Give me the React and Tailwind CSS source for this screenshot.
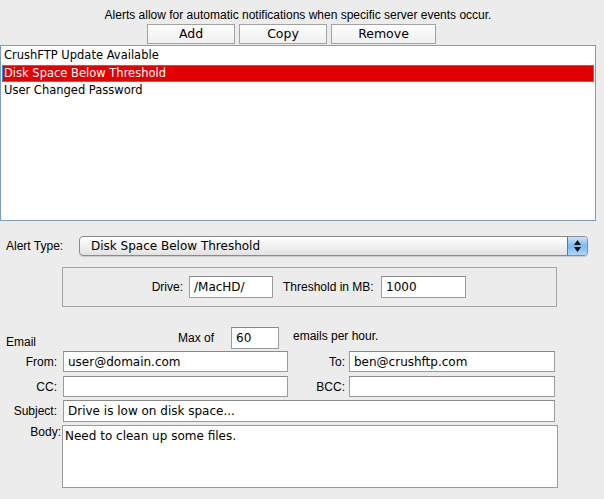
import React from "react";

const lbl = "font-['Liberation_Sans',Arial,sans-serif] text-[12px] text-black leading-[14px]";
const fld = "font-['DejaVu_Sans',sans-serif] text-[12px] text-black bg-white border border-[#9b9b9b] border-t-[#8a8a8a] px-[4px] flex items-center leading-none";

function Field({ className = "", children }) {
  return <div className={`${fld} ${className}`}>{children}</div>;
}

export default function App() {
  return (
    <div className="w-[604px] h-[499px] bg-[#ececec] overflow-hidden">
      <div className="w-[596px]">
        <div className={`${lbl} text-center pt-[8px] h-[24px]`}>
          Alerts allow for automatic notifications when specific server events occur.
        </div>
        <div className="flex h-[20px] pl-[147px] gap-[4px]">
          {[
            ["Add", "w-[88px]"],
            ["Copy", "w-[88px]"],
            ["Remove", "w-[105px]"],
          ].map(([t, w]) => (
            <div
              key={t}
              className={`${w} h-[20px] border border-[#a2a2a2] bg-gradient-to-b from-[#fdfdfd] to-[#f0f0f0] flex items-center justify-center font-['DejaVu_Sans',sans-serif] text-[12.5px] text-black`}
            >
              {t}
            </div>
          ))}
        </div>
        <div className="mt-px h-[176px] border border-[#7d9dc2] bg-white px-px pt-[1px] font-['DejaVu_Sans',sans-serif] text-[11.5px] text-black">
          <div className="h-[18px] flex items-center pl-[2px]">CrushFTP Update Available</div>
          <div className="h-[17px] flex items-center pl-[1px] bg-[#e30000] border border-[#1b8fe0] text-white">
            Disk Space Below Threshold
          </div>
          <div className="h-[17px] flex items-center pl-[2px]">User Changed Password</div>
        </div>
      </div>

      <div className="flex items-center mt-[15px] h-[20px]">
        <div className={`${lbl} w-[79px] pl-[6px]`}>Alert Type:</div>
        <div className="w-[509px] h-[20px] rounded-[4px] border border-[#8b8b8b] bg-gradient-to-b from-[#ffffff] via-[#f1f1f1] to-[#e2e2e2] flex items-center shadow-[0_1px_1px_rgba(0,0,0,0.15)] overflow-hidden">
          <div className="flex-1 pl-[11px] font-['DejaVu_Sans',sans-serif] text-[12px] text-black">
            Disk Space Below Threshold
          </div>
          <div className="w-[20px] h-full border-l border-[#5077b0] bg-gradient-to-b from-[#c8e3fb] via-[#7cbaf0] to-[#a9d6fb] flex flex-col items-center justify-center gap-[2px]">
            <svg width="7" height="5" viewBox="0 0 7 5"><path d="M3.5 0L7 5H0z" fill="#111" /></svg>
            <svg width="7" height="5" viewBox="0 0 7 5"><path d="M0 0h7L3.5 5z" fill="#111" /></svg>
          </div>
        </div>
      </div>

      <div className="ml-[62px] mt-[11px] w-[495px] h-[40px] border border-[#a4a4a4] flex items-center">
        <div className={`${lbl} w-[126px] text-right pr-[6px]`}>Drive:</div>
        <Field className="w-[84px] h-[22px]">/MacHD/</Field>
        <div className={`${lbl} ml-[10px] w-[98px]`}>Threshold in MB:</div>
        <Field className="w-[85px] h-[22px]">1000</Field>
      </div>

      <div className="flex items-start mt-[20px] h-[22px]">
        <div className={`${lbl} pl-[6px] w-[178px] mt-[8px]`}>Email</div>
        <div className={`${lbl} w-[53px] mt-[4px]`}>Max of</div>
        <Field className="w-[48px] h-[22px]">60</Field>
        <div className={`${lbl} ml-[14px] mt-[2px]`}>emails per hour.</div>
      </div>

      <div className="flex items-center mt-[2px] h-[21px]">
        <div className={`${lbl} w-[60px] text-right pr-[3px]`}>From:</div>
        <Field className="w-[225px] h-[21px] ml-[3px]">user@domain.com</Field>
        <div className={`${lbl} w-[61px] text-right pr-[4px]`}>To:</div>
        <Field className="w-[206px] h-[21px]">ben@crushftp.com</Field>
      </div>

      <div className="flex items-center mt-[4px] h-[21px]">
        <div className={`${lbl} w-[60px] text-right pr-[3px]`}>CC:</div>
        <Field className="w-[225px] h-[21px] ml-[3px]"></Field>
        <div className={`${lbl} w-[61px] text-right pr-[4px]`}>BCC:</div>
        <Field className="w-[206px] h-[21px]"></Field>
      </div>

      <div className="flex items-center mt-[3px] h-[22px]">
        <div className={`${lbl} w-[60px] text-right pr-[3px]`}>Subject:</div>
        <Field className="w-[492px] h-[22px] ml-[3px]">Drive is low on disk space...</Field>
      </div>

      <div className="flex items-start mt-[3px]">
        <div className={`${lbl} w-[62px] text-right pr-[1px]`}>Body:</div>
        <div className="w-[496px] h-[63px] bg-white border border-[#9b9b9b] pl-[2px] pt-[3px] font-['DejaVu_Sans',sans-serif] text-[12px] leading-[14px] text-black">
          Need to clean up some files.
        </div>
      </div>
    </div>
  );
}
